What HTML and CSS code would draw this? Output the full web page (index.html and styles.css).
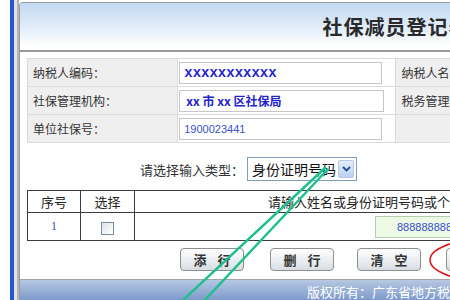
FILE: index.html
```html
<!DOCTYPE html>
<html lang="zh-CN">
<head>
  <meta charset="UTF-8">
  <title>社保减员登记表</title>
  <link rel="stylesheet" href="styles.css">
</head>
<body>
  <div class="frame">
    <div class="edge"></div>
    <div class="panel">
      <div class="head"><h1>社保减员登记表</h1></div>
      <div class="content">
        <table class="info">
          <tr>
            <td class="label">纳税人编码：</td>
            <td class="value"><div class="box code">xxxxxxxxxxx</div></td>
            <td class="label">纳税人名称</td>
            <td class="value"></td>
          </tr>
          <tr>
            <td class="label">社保管理机构：</td>
            <td class="value"><div class="box org">xx 市 xx 区社保局</div></td>
            <td class="label">税务管理机构</td>
            <td class="value"></td>
          </tr>
          <tr>
            <td class="label">单位社保号：</td>
            <td class="value"><div class="box num">1900023441</div></td>
            <td class="label"></td>
            <td class="value"></td>
          </tr>
        </table>

        <div class="choose">
          <span>请选择输入类型：</span>
          <div class="select">
            <span>身份证明号码</span>
            <span class="drop">
              <svg width="9" height="6" viewBox="0 0 9 6"><path d="M1 1 L4.5 4.5 L8 1" fill="none" stroke="#234a9a" stroke-width="1.8"/></svg>
            </span>
          </div>
        </div>

        <table class="grid">
          <tr class="th">
            <td class="c1">序号</td>
            <td class="c2">选择</td>
            <td class="c3">请输入姓名或身份证明号码或个人社保号</td>
          </tr>
          <tr class="tr">
            <td class="c1 idx">1</td>
            <td class="c2"><span class="check"></span></td>
            <td class="c3"><div class="green">8888888888888888</div></td>
          </tr>
        </table>

        <div class="actions">
          <button>添&nbsp;行</button>
          <button>删&nbsp;行</button>
          <button>清&nbsp;空</button>
          <button>保&nbsp;存</button>
        </div>
      </div>
      <div class="foot">版权所有：广东省地方税务局</div>
    </div>
  </div>

  <svg class="marks" width="450" height="300" viewBox="0 0 450 300">
    <path d="M326 167 L181 302" stroke="#1dbf8d" stroke-width="2.4" fill="none"/>
    <path d="M328 169 L203 302" stroke="#1dbf8d" stroke-width="2.4" fill="none"/>
    <ellipse cx="500" cy="260" rx="70" ry="23" stroke="#e01818" stroke-width="1.6" fill="none"/>
  </svg>
</body>
</html>
```

FILE: styles.css
```css
body { margin: 0; font-family: "Noto Sans CJK SC", sans-serif; font-size: 12px; color: #333; background: #fff; overflow: hidden; }
.frame { display: flex; height: 300px; }
.edge {
  width: 19px; flex: none;
  background: linear-gradient(to right, #fff 0 10px, #2456d6 10px 14px, #e2e2e2 14px 17px, #b4b4b4 17px 19px);
}
.panel {
  width: 752px; flex: none; margin-top: 2px;
  border: 1px solid #9c9c9c; border-bottom: none; border-radius: 4px 0 0 0;
  display: flex; flex-direction: column;
}
.head {
  height: 47px; flex: none; display: flex; align-items: center; justify-content: center;
  background: linear-gradient(#c2d9f2, #e6f0fa 60%, #fff 90%);
  border-bottom: 2px solid #9a9a9a;
}
.head h1 { margin: 0; font-size: 20px; font-weight: bold; color: #2a2a2a; letter-spacing: 1px; }
.content { padding: 6px 0 0 7px; }

.info { border-collapse: collapse; width: 738px; border: 1px solid #d4d4d4; }
.info td { height: 27px; border: 1px solid #dcdcdc; padding: 0; }
.info .label { width: 142px; background: #efefef; padding-left: 5px; color: #333; }
.info .value { width: 214px; background: #fff; }
.box {
  width: 197px; height: 20px; margin-left: 1px; padding-left: 4px;
  border: 1px solid #c6c6c6; line-height: 20px; color: #2323d0;
}
.box.code { font-family: "Liberation Mono", monospace; font-weight: bold; font-size: 14px; }
.box.org { font-weight: bold; font-size: 12px; padding-left: 6px; }
.box.num { font-family: "Liberation Sans", sans-serif; font-size: 11px; color: #3a4fc8; }

.choose { display: flex; align-items: center; padding: 14px 0 9px 113px; font-size: 13px; }
.select {
  display: flex; align-items: center; justify-content: space-between; margin-left: 3px;
  width: 102px; height: 22px; padding: 0 2px 0 4px; border: 1px solid #7f9db9;
  font-size: 14px; color: #111;
}
.drop {
  width: 14px; height: 16px; display: flex; align-items: center; justify-content: center;
  background: linear-gradient(#e4edfb, #bcd0f2); border: 1px solid #b8c8e8; border-radius: 2px;
}

.grid { border-collapse: collapse; width: 738px; border: 1px solid #3c3c3c; }
.grid td { border: 1px solid #3c3c3c; padding: 0; text-align: center; }
.grid .th td { height: 21px; font-size: 13px; color: #222; }
.grid .tr td { height: 27px; }
.grid .c1 { width: 52px; }
.grid .c2 { width: 53px; }
.grid .th .c3 { text-align: left; padding-left: 133px; }
.grid .tr .c3 { text-align: left; }
.idx { color: #3848c0; font-family: "Liberation Serif", serif; font-size: 12px; }
.check {
  display: inline-block; width: 11px; height: 11px; vertical-align: middle;
  border: 1px solid #7c8ca0; background: linear-gradient(135deg, #dde3ea, #fff);
}
.green {
  margin-left: 240px; width: 120px; height: 20px; padding-left: 21px;
  background: #ecf9e4; border: 1px solid #b4ccb0; line-height: 20px;
  font-family: "Liberation Sans", sans-serif; font-size: 11px; color: #3a50c8;
}

.actions { display: flex; gap: 25px; padding: 7px 0 0 153px; }
.actions button {
  width: 64px; height: 23px; flex: none; padding: 0;
  border: 1px solid #8e8e8e; border-radius: 4px;
  background: linear-gradient(#fefefe, #e8ecf0 60%, #d8dde2);
  font-family: "Noto Sans CJK SC", sans-serif; font-size: 13px; font-weight: bold; color: #333;
  letter-spacing: 4px; text-indent: 4px;
}
.actions button:nth-child(2) { margin-left: 1px; }
.actions button:nth-child(3) { margin-left: -2px; }

.foot {
  margin-top: auto; height: 20px; border-top: 1px solid #a4a4a4;
  background: linear-gradient(#b6c8e2, #7d9acb);
  color: #fff; font-size: 13px; line-height: 24px; padding-left: 287px;
}

.marks { position: absolute; top: 0; left: 0; pointer-events: none; }
```
